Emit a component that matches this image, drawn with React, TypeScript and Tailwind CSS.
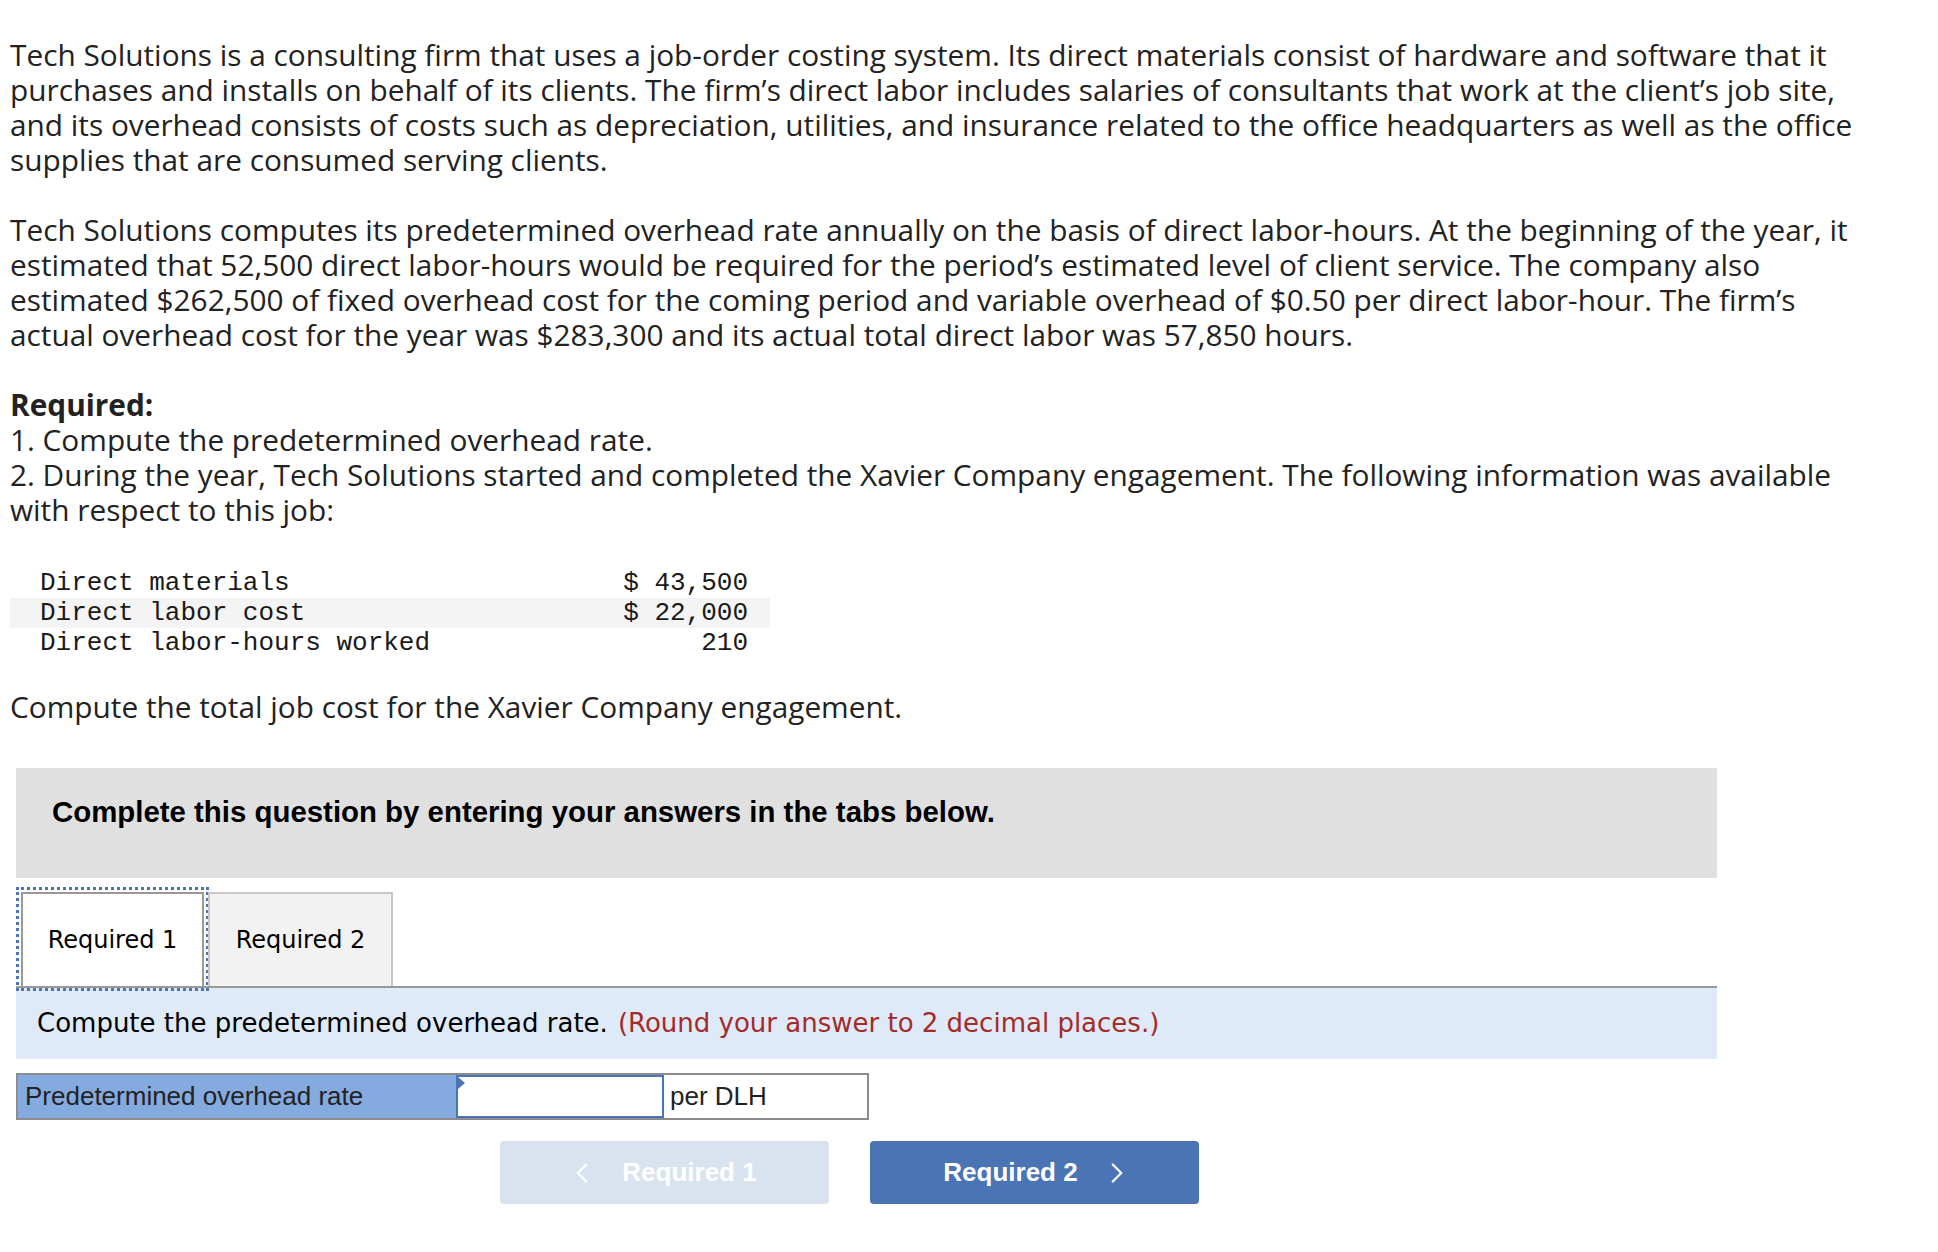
import {ChevronLeft, ChevronRight} from "lucide-react";

const body = "font-['Open_Sans','Lato',sans-serif] text-[29.8px] leading-[35px] text-[#222]";

const p1 = [
    "Tech Solutions is a consulting firm that uses a job-order costing system. Its direct materials consist of hardware and software that it",
    "purchases and installs on behalf of its clients. The firm’s direct labor includes salaries of consultants that work at the client’s job site,",
    "and its overhead consists of costs such as depreciation, utilities, and insurance related to the office headquarters as well as the office",
    "supplies that are consumed serving clients.",
];

const p2 = [
    "Tech Solutions computes its predetermined overhead rate annually on the basis of direct labor-hours. At the beginning of the year, it",
    "estimated that 52,500 direct labor-hours would be required for the period’s estimated level of client service. The company also",
    "estimated $262,500 of fixed overhead cost for the coming period and variable overhead of $0.50 per direct labor-hour. The firm’s",
    "actual overhead cost for the year was $283,300 and its actual total direct labor was 57,850 hours.",
];

const jobRows = [
    {label: "Direct materials", value: "$ 43,500"},
    {label: "Direct labor cost", value: "$ 22,000"},
    {label: "Direct labor-hours worked", value: "210"},
];

function Lines({lines}: {lines: string[]}) {
    return (
        <>
            {lines.map((l, i) => (
                <span key={i} className="block whitespace-nowrap">{l}</span>
            ))}
        </>
    );
}

export default function App() {
    return (
        <div className="w-[1938px] min-h-[1252px] bg-white">
            <div className={`pl-[10px] pt-[37px] ${body}`}>
                <p><Lines lines={p1}/></p>
                <p className="mt-[35px]"><Lines lines={p2}/></p>
                <div className="mt-[35px]">
                    <span className="block font-bold">Required:</span>
                    <Lines lines={[
                        "1. Compute the predetermined overhead rate.",
                        "2. During the year, Tech Solutions started and completed the Xavier Company engagement. The following information was available",
                        "with respect to this job:",
                    ]}/>
                </div>

                <table className="mt-[41px] w-[760px] font-['Liberation_Mono',monospace] text-[26px] text-[#1a1a1a]">
                    <tbody>
                    {jobRows.map((r, i) => (
                        <tr key={r.label} className={`h-[30px] ${i === 1 ? 'bg-[#f4f4f4]' : ''}`}>
                            <td className="pl-[30px] leading-[30px] whitespace-pre">{r.label}</td>
                            <td className="pr-[22px] text-right leading-[30px] whitespace-pre">{r.value}</td>
                        </tr>
                    ))}
                    </tbody>
                </table>

                <p className="mt-[31px]">Compute the total job cost for the Xavier Company engagement.</p>
            </div>

            <div className="ml-[16px] w-[1701px]">
                <div className="mt-[44px] h-[110px] bg-[#e0e0e0] pl-[36px] pt-[26px]">
                    <span className="font-['Liberation_Sans',Arial,sans-serif] text-[29.4px] font-bold leading-[36px] text-black">
                        Complete this question by entering your answers in the tabs below.
                    </span>
                </div>

                <div className="mt-[14px] flex items-end font-['DejaVu_Sans',Verdana,sans-serif] text-[24px] text-black">
                    <div className="ml-[5px] flex h-[94px] w-[183px] items-center justify-center border-2 border-b-0 border-[#999] bg-white outline-dotted outline-[3px] outline-offset-[2px] outline-[#4a74b4]">
                        Required 1
                    </div>
                    <div className="ml-[4px] flex h-[94px] w-[185px] items-center justify-center border-2 border-b-0 border-[#c8c8c8] bg-[#f2f2f2]">
                        Required 2
                    </div>
                </div>
                <div className="h-[2px] bg-[#999]"/>
                <div className="flex h-[71px] items-center bg-[#deeaf7] pl-[21px] font-['DejaVu_Sans',Verdana,sans-serif] text-[26px]">
                    <span className="text-black">Compute the predetermined overhead rate.</span>
                    <span className="ml-[10px] text-[#a52a2a]">(Round your answer to 2 decimal places.)</span>
                </div>

                <div className="mt-[14px] flex h-[47px] w-[853px] border-2 border-[#8c8c8c] font-['Liberation_Sans',Arial,sans-serif] text-[26px] text-[#222]">
                    <div className="flex w-[438px] items-center bg-[#84aadf] pl-[7px]">Predetermined overhead rate</div>
                    <div className="relative w-[208px] border-2 border-[#4a74b4] bg-white">
                        <span className="absolute left-0 top-0 h-0 w-0 border-y-[6px] border-l-[7px] border-y-transparent border-l-[#4a74b4]"/>
                        <input className="h-full w-full bg-transparent px-2 outline-none" aria-label="Predetermined overhead rate"/>
                    </div>
                    <div className="flex flex-1 items-center bg-white pl-[6px]">per DLH</div>
                </div>

                <div className="ml-[484px] mt-[21px] flex gap-[41px] font-['Liberation_Sans',Arial,sans-serif] text-[26px] font-bold text-white">
                    <button className="relative flex h-[63px] w-[329px] items-center justify-center rounded-[4px] bg-[#d9e3f0]">
                        <ChevronLeft size={34} strokeWidth={1.6} className="absolute left-[65px]"/>
                        <span className="ml-[50px]">Required 1</span>
                    </button>
                    <button className="relative flex h-[63px] w-[329px] items-center justify-center rounded-[4px] bg-[#4a74b4]">
                        <span className="mr-[48px]">Required 2</span>
                        <ChevronRight size={34} strokeWidth={1.6} className="absolute right-[65px]"/>
                    </button>
                </div>
            </div>
        </div>
    );
}
